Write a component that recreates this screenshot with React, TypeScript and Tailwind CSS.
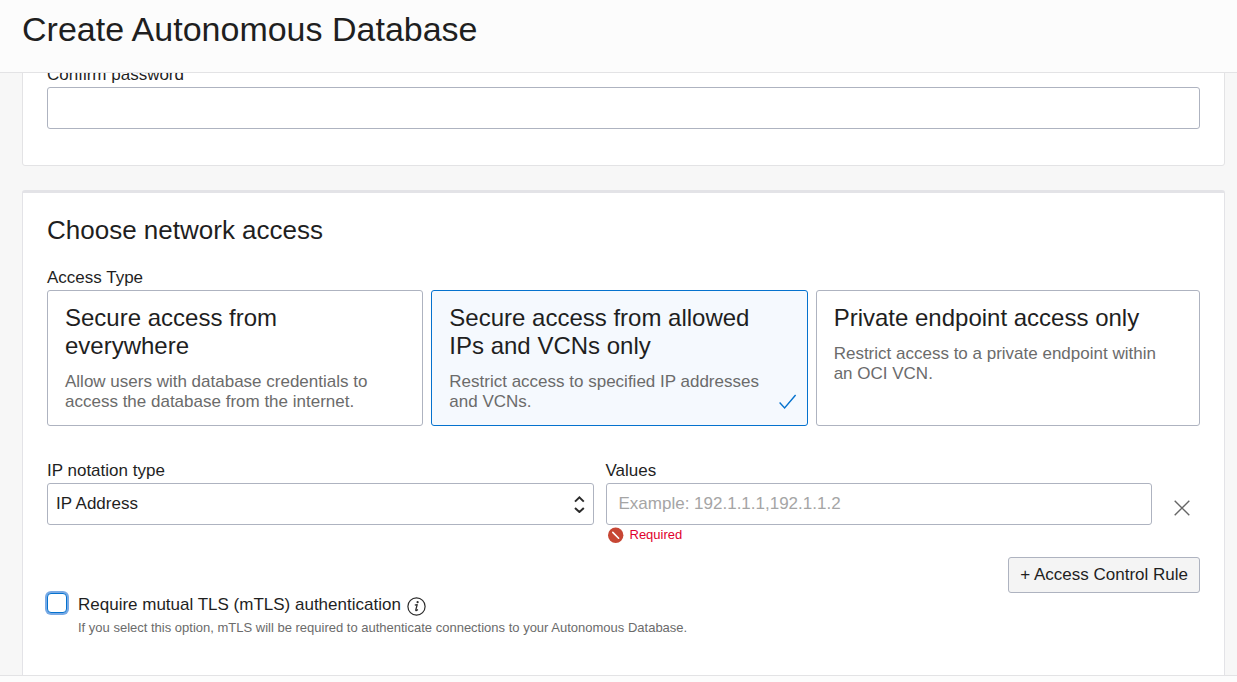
import { useState } from "react";
import type { ReactNode } from "react";

type AccessOption = { id: string; title: string; description: string };

const accessOptions: AccessOption[] = [
  {
    id: "everywhere",
    title: "Secure access from everywhere",
    description: "Allow users with database credentials to access the database from the internet.",
  },
  {
    id: "allowed",
    title: "Secure access from allowed IPs and VCNs only",
    description: "Restrict access to specified IP addresses and VCNs.",
  },
  {
    id: "private",
    title: "Private endpoint access only",
    description: "Restrict access to a private endpoint within an OCI VCN.",
  },
];

const fieldClass =
  "h-[42px] w-full rounded-[3px] border border-[#aeb3c0] bg-white text-[17px] leading-5 outline-none";

function FieldLabel({ htmlFor, children }: { htmlFor: string; children: ReactNode }) {
  return (
    <label htmlFor={htmlFor} className="mb-0.5 block text-[17px] leading-5">
      {children}
    </label>
  );
}

function CheckMark() {
  return (
    <svg viewBox="0 0 18 16" className="absolute right-2.5 bottom-[15px] h-4 w-[18px]" fill="none" stroke="#0572ce" strokeWidth="1.4" aria-hidden="true">
      <path d="M.6 8.6 L5.6 14 L16.6 1" />
    </svg>
  );
}

function AccessCard({ option, selected, onSelect }: { option: AccessOption; selected: boolean; onSelect: () => void }) {
  return (
    <label
      className={
        "relative mr-2 block min-h-[136px] cursor-pointer rounded-[3px] border pt-[13px] pr-8 pb-3 pl-[17px] last:mr-0 " +
        (selected ? "border-[#0572ce] bg-[#f5f9fe]" : "border-[#aeb3c0] bg-white")
      }
    >
      <input type="radio" name="access-type" className="sr-only" checked={selected} onChange={onSelect} />
      <span className="block text-[24px] leading-7">{option.title}</span>
      <span className="mt-3 block text-[17px] leading-5 text-[#6b6b6b]">{option.description}</span>
      {selected && <CheckMark />}
    </label>
  );
}

export default function App() {
  const [access, setAccess] = useState("allowed");
  const [mtls, setMtls] = useState(false);

  return (
    <div className="flex h-screen flex-col overflow-hidden bg-[#f7f7f7] font-['Liberation_Sans',Arial,sans-serif] text-[#1f1f1f]">
      <header className="border-b border-[#e3e3e5] bg-[#fcfcfc] px-[22px] pt-[9px] pb-[23px]">
        <h1 className="text-[34px] leading-10">Create Autonomous Database</h1>
      </header>

      <main className="min-h-0 flex-1 overflow-hidden pr-3 pl-[22px]">
        <section className="-mt-4 rounded-[3px] border border-[#e3e3e5] bg-white px-6 pt-[7px] pb-9">
          <FieldLabel htmlFor="confirm-password">Confirm password</FieldLabel>
          <input id="confirm-password" type="password" className={fieldClass + " px-3"} />
        </section>

        <section className="mt-6 rounded-[3px] border border-t-[3px] border-[#e3e3e7] bg-white px-6 pt-[19px] pb-16">
          <h2 className="text-[26px] leading-9">Choose network access</h2>

          <fieldset className="mt-5">
            <legend className="mb-0.5 text-[17px] leading-5">Access Type</legend>
            <div className="grid grid-cols-3">
              {accessOptions.map((o) => (
                <AccessCard key={o.id} option={o} selected={access === o.id} onSelect={() => setAccess(o.id)} />
              ))}
            </div>
          </fieldset>

          <div className="mt-[35px] flex">
            <div className="grid flex-1 grid-cols-2 gap-3">
              <div>
                <FieldLabel htmlFor="ip-notation">IP notation type</FieldLabel>
                <div className="relative">
                  <select id="ip-notation" className={fieldClass + " appearance-none pr-8 pl-2"}>
                    <option>IP Address</option>
                    <option>CIDR Block</option>
                  </select>
                  <svg viewBox="0 0 12 18" className="pointer-events-none absolute top-3 right-2 h-[18px] w-3" fill="none" stroke="#2a2a2a" strokeWidth="2" aria-hidden="true">
                    <path d="M1 6.6 L5.4 2.4 L9.8 6.6 M1 13 L5.4 17 L9.8 13" />
                  </svg>
                </div>
              </div>
              <div>
                <FieldLabel htmlFor="ip-values">Values</FieldLabel>
                <input
                  id="ip-values"
                  type="text"
                  placeholder="Example: 192.1.1.1,192.1.1.2"
                  aria-describedby="ip-values-error"
                  className={fieldClass + " px-3 placeholder:text-[#a5a5a5]"}
                />
                <p id="ip-values-error" className="flex items-center gap-1.5 pt-0.5 pl-0.5 text-[13px] leading-4 text-[#e0002d]">
                  <svg viewBox="0 0 16 16" className="h-4 w-4" aria-hidden="true">
                    <circle cx="7.7" cy="8.3" r="7.7" fill="#c74634" />
                    <path d="M4.8 5.4 L10.6 11.2" stroke="#fff" strokeWidth="1.6" strokeLinecap="round" />
                  </svg>
                  Required
                </p>
              </div>
            </div>
            <button type="button" aria-label="Remove rule" className="mt-[39px] ml-[22px] flex h-4 w-[26px] justify-start">
              <svg viewBox="0 0 16 16" className="h-4 w-4" fill="none" stroke="#666" strokeWidth="1.4" aria-hidden="true">
                <path d="M.7 .7 L15.3 15.3 M15.3 .7 L.7 15.3" />
              </svg>
            </button>
          </div>

          <div className="mt-3.5 flex justify-end">
            <button type="button" className="h-9 rounded-[3px] border border-[#aeb3c0] bg-[#f4f4f4] px-[11px] text-[17px] leading-5">
              + Access Control Rule
            </button>
          </div>

          <div className="flex items-start gap-[11px]">
            <input
              id="mtls"
              type="checkbox"
              checked={mtls}
              onChange={(e) => setMtls(e.target.checked)}
              className="h-5 w-5 appearance-none rounded-[4px] border border-[#0572ce] bg-white ring-2 ring-[#79aae5] checked:bg-[#0572ce]"
            />
            <div>
              <div className="flex items-center gap-1.5">
                <label htmlFor="mtls" className="text-[17px] leading-6">
                  Require mutual TLS (mTLS) authentication
                </label>
                <svg viewBox="0 0 20 20" className="mt-1 h-5 w-5" fill="none" stroke="#2a2a2a" role="img" aria-label="More information">
                  <circle cx="9.5" cy="9.5" r="8.6" strokeWidth="1.2" />
                  <path d="M7.8 8.2 L10.2 7.7 L8.8 12.8 Q8.6 14 9.6 13.5 L10.9 12.4" strokeWidth="1.3" strokeLinejoin="round" />
                  <circle cx="10.6" cy="5.2" r="1.1" fill="#2a2a2a" stroke="none" />
                </svg>
              </div>
              <p className="mt-[3px] text-[13px] leading-4 text-[#6b6b6b]">
                If you select this option, mTLS will be required to authenticate connections to your Autonomous Database.
              </p>
            </div>
          </div>
        </section>
      </main>

      <footer className="h-[7px] border-t border-[#e3e3e5] bg-[#fcfcfc]" />
    </div>
  );
}
